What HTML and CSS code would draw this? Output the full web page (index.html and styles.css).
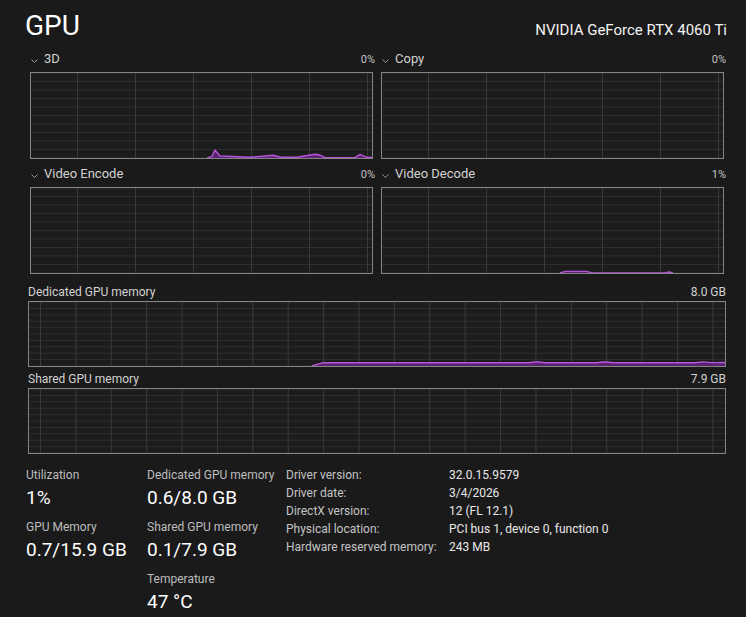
FILE: index.html
```html
<!DOCTYPE html>
<html lang="en">
<head>
<meta charset="utf-8">
<title>GPU</title>
<link rel="stylesheet" href="styles.css">
</head>
<body>
<div class="page">
  <header class="header">
    <h1 class="title">GPU</h1>
    <div class="device">NVIDIA GeForce RTX 4060 Ti</div>
  </header>

  <section class="engines">
    <div class="cell">
      <div class="cell-head">
        <svg class="chev" viewBox="0 0 7 4" width="7" height="4"><polyline points="0.5,0.5 3.5,3.5 6.5,0.5"/></svg>
        <span class="name">3D</span>
        <span class="pct">0%</span>
      </div>
      <div class="box">
        <svg class="plot" viewBox="0 0 341 85" preserveAspectRatio="none">
          <polygon class="fill" points="176,85 180.7,83.7 184,77 189,83 219,84.3 242,82.3 250,84.3 265.7,84.3 284,81.3 289,82 294,84.7 324,84.7 329,81.3 335.7,84.3 341,84.5 341,85"/>
          <polyline class="line" points="176,85 180.7,83.7 184,77 189,83 219,84.3 242,82.3 250,84.3 265.7,84.3 284,81.3 289,82 294,84.7 324,84.7 329,81.3 335.7,84.3 341,84.5"/>
        </svg>
      </div>
    </div>
    <div class="cell">
      <div class="cell-head">
        <svg class="chev" viewBox="0 0 7 4" width="7" height="4"><polyline points="0.5,0.5 3.5,3.5 6.5,0.5"/></svg>
        <span class="name">Copy</span>
        <span class="pct">0%</span>
      </div>
      <div class="box"></div>
    </div>
    <div class="cell">
      <div class="cell-head">
        <svg class="chev" viewBox="0 0 7 4" width="7" height="4"><polyline points="0.5,0.5 3.5,3.5 6.5,0.5"/></svg>
        <span class="name">Video Encode</span>
        <span class="pct">0%</span>
      </div>
      <div class="box"></div>
    </div>
    <div class="cell">
      <div class="cell-head">
        <svg class="chev" viewBox="0 0 7 4" width="7" height="4"><polyline points="0.5,0.5 3.5,3.5 6.5,0.5"/></svg>
        <span class="name">Video Decode</span>
        <span class="pct">1%</span>
      </div>
      <div class="box">
        <svg class="plot" viewBox="0 0 341 85" preserveAspectRatio="none">
          <polygon class="fill" points="178,85 183,83.4 205,83.4 210,85 283,85 287,84 291,85"/>
          <polyline class="line" points="178,85 183,83.4 205,83.4 210,85 283,85 287,84 291,85"/>
        </svg>
      </div>
    </div>
  </section>

  <section class="memory">
    <div class="mem-head"><span>Dedicated GPU memory</span><span class="cap">8.0 GB</span></div>
    <div class="box mem-box">
      <svg class="plot" viewBox="0 0 696 64" preserveAspectRatio="none">
        <polygon class="fill" points="282.7,64 294.3,60.7 500,60.7 508,59.8 516,60.7 568,60.7 576,59.8 584,60.7 666,60.7 674,59.9 682,60.6 696,60.5 696,64"/>
        <polyline class="line" points="282.7,64 294.3,60.7 500,60.7 508,59.8 516,60.7 568,60.7 576,59.8 584,60.7 666,60.7 674,59.9 682,60.6 696,60.5"/>
      </svg>
    </div>
    <div class="mem-head"><span>Shared GPU memory</span><span class="cap">7.9 GB</span></div>
    <div class="box mem-box"></div>
  </section>

  <section class="stats">
    <div class="col c1">
      <div class="stat"><div class="lbl">Utilization</div><div class="val">1%</div></div>
      <div class="stat"><div class="lbl">GPU Memory</div><div class="val">0.7/15.9 GB</div></div>
    </div>
    <div class="col c2">
      <div class="stat"><div class="lbl">Dedicated GPU memory</div><div class="val">0.6/8.0 GB</div></div>
      <div class="stat"><div class="lbl">Shared GPU memory</div><div class="val">0.1/7.9 GB</div></div>
      <div class="stat"><div class="lbl">Temperature</div><div class="val">47 °C</div></div>
    </div>
    <dl class="info">
      <dt>Driver version:</dt><dd>32.0.15.9579</dd>
      <dt>Driver date:</dt><dd>3/4/2026</dd>
      <dt>DirectX version:</dt><dd>12 (FL 12.1)</dd>
      <dt>Physical location:</dt><dd>PCI bus 1, device 0, function 0</dd>
      <dt>Hardware reserved memory:</dt><dd>243 MB</dd>
    </dl>
  </section>
</div>
</body>
</html>
```
FILE: styles.css
```css
html, body {
  margin: 0;
  padding: 0;
}
body {
  background: #1a1a1a;
  color: #ffffff;
  font-family: Roboto, "Liberation Sans", sans-serif;
  width: 746px;
  height: 617px;
  overflow: hidden;
}

.header {
  display: flex;
  justify-content: space-between;
  align-items: baseline;
  padding: 9px 19px 0 25px;
}
.title {
  margin: 0;
  font-size: 28px;
  font-weight: 400;
  line-height: 34px;
  color: #ffffff;
}
.device {
  font-size: 15px;
  color: #f2f2f2;
}

.engines {
  display: grid;
  grid-template-columns: 345px 345px;
  column-gap: 6px;
  row-gap: 8px;
  padding: 9px 0 0 30px;
}
.cell-head {
  display: flex;
  align-items: baseline;
  height: 14px;
  margin-bottom: 6px;
  font-size: 13px;
  line-height: 14px;
  color: #d2d2d2;
}
.chev {
  margin: 0 6px 4px 1px;
  fill: none;
  stroke: #9a9a9a;
  stroke-width: 1;
}
.pct {
  margin-left: auto;
  font-size: 11px;
  color: #c4c4c4;
}

.box {
  box-sizing: border-box;
  height: 87px;
  margin-right: 2px;
  border: 1px solid #858585;
  background-color: #1c1c1c;
  background-image:
    linear-gradient(to right, #393939 1px, transparent 1px),
    linear-gradient(to bottom, #2f2f2f 1px, transparent 1px);
  background-size: 58px 100%, 100% 8.5px;
  background-position: 46px 0, 0 8px;
}
.plot {
  display: block;
  width: 100%;
  height: 100%;
}
.fill {
  fill: #5a2270;
  stroke: none;
}
.line {
  fill: none;
  stroke: #b456d8;
  stroke-width: 1.4;
  stroke-linejoin: round;
}

.memory {
  padding: 11px 20px 0 28px;
}
.mem-head {
  display: flex;
  justify-content: space-between;
  height: 14px;
  margin-bottom: 2px;
  font-size: 12px;
  line-height: 14px;
  color: #d2d2d2;
}
.mem-box {
  height: 66px;
  margin-right: 0;
  margin-bottom: 5px;
  background-size: 35.4px 100%, 100% 6.4px;
  background-position: 11px 0, 0 6px;
}

.stats {
  display: flex;
  padding: 6px 0 0 26px;
}
.col {
  display: flex;
  flex-direction: column;
  gap: 6px;
}
.c1 { width: 121px; }
.c2 { width: 139px; }
.lbl {
  font-size: 12px;
  line-height: 20px;
  color: #bdbdbd;
}
.val {
  font-size: 19px;
  line-height: 26px;
  color: #ffffff;
}
.info {
  margin: 0;
  padding-top: 1px;
  display: grid;
  grid-template-columns: 163px auto;
  grid-auto-rows: 18px;
  align-content: start;
  font-size: 12px;
  line-height: 18px;
}
.info dt {
  color: #c4c4c4;
}
.info dd {
  margin: 0;
  color: #e8e8e8;
}
```
